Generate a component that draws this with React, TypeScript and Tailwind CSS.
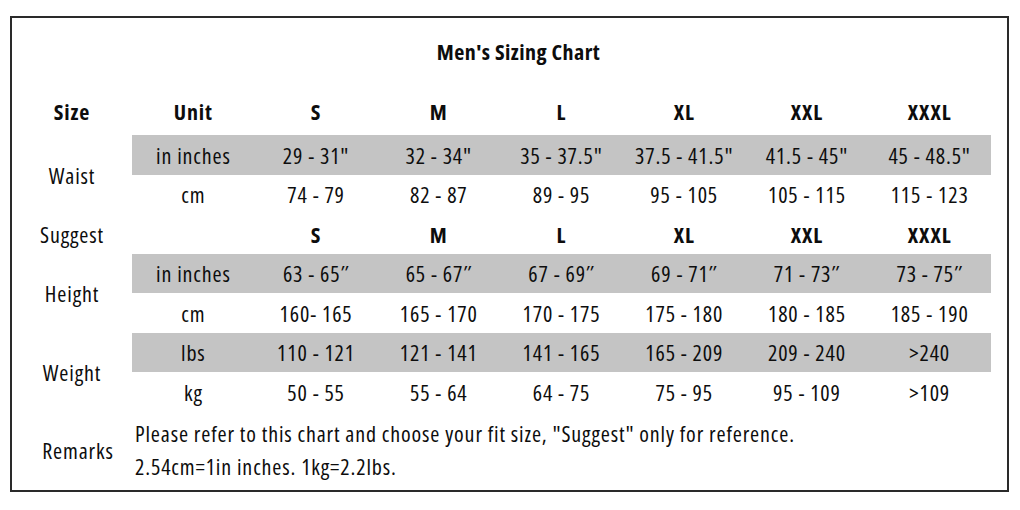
import React from 'react'

// ─── Chart data ────────────────────────────────────────────────────────────────
const SIZES = ['S', 'M', 'L', 'XL', 'XXL', 'XXXL']

interface Row {
  unit: string
  values: string[]
  shaded?: boolean
  bold?: boolean
}

interface Group {
  label: string
  rows: Row[]
}

const GROUPS: Group[] = [
  {
    label: 'Waist',
    rows: [
      { unit: 'in inches', shaded: true, values: ['29 - 31"', '32 - 34"', '35 - 37.5"', '37.5 - 41.5"', '41.5 - 45"', '45 - 48.5"'] },
      { unit: 'cm', values: ['74 - 79', '82 - 87', '89 - 95', '95 - 105', '105 - 115', '115 - 123'] },
    ],
  },
  {
    label: 'Suggest',
    rows: [{ unit: '', bold: true, values: SIZES }],
  },
  {
    label: 'Height',
    rows: [
      { unit: 'in inches', shaded: true, values: ['63 - 65″', '65 - 67″', '67 - 69″', '69 - 71″', '71 - 73″', '73 - 75″'] },
      { unit: 'cm', values: ['160- 165', '165 - 170', '170 - 175', '175 - 180', '180 - 185', '185 - 190'] },
    ],
  },
  {
    label: 'Weight',
    rows: [
      { unit: 'lbs', shaded: true, values: ['110 - 121', '121 - 141', '141 - 165', '165 - 209', '209 - 240', '>240'] },
      { unit: 'kg', values: ['50 - 55', '55 - 64', '64 - 75', '75 - 95', '95 - 109', '>109'] },
    ],
  },
]

// Tall, narrow letters like the chart: condensed Open Sans, opened up a touch
const FONT = "font-['Open_Sans','Carlito',sans-serif] [font-stretch:75%] tracking-[0.85px]"

// ─── One line of the table (unit + six sizes) ─────────────────────────────────
function DataRow({ row }: { row: Row }) {
  return (
    <div
      className={`grid h-[39.5px] grid-cols-7 items-center text-center ${row.shaded ? 'bg-[#c4c4c4]' : ''} ${row.bold ? 'font-bold' : ''}`}
    >
      <span className="whitespace-nowrap">{row.unit}</span>
      {row.values.map((v, i) => (
        <span key={i} className="whitespace-nowrap">{v}</span>
      ))}
    </div>
  )
}

export default function App() {
  return (
    <div className={`min-h-[510px] w-[1020px] bg-white pl-[10px] pt-[16px] text-[22px] leading-[30px] text-[#0d0d0d] ${FONT}`}>
      <div className="h-[476px] w-[999px] border-2 border-[#2a2a2a] pr-[16px]">
        {/* Title */}
        <div className="h-[74px] pl-[34px] pt-[18px] text-center font-bold tracking-[0.45px]">
          Men's Sizing Chart
        </div>

        {/* Header row */}
        <div className="flex h-[43px] items-center pb-[5px] font-bold">
          <div className="w-[120px] text-center">Size</div>
          <div className="grid w-[859px] grid-cols-7 text-center">
            <span>Unit</span>
            {SIZES.map(s => (
              <span key={s}>{s}</span>
            ))}
          </div>
        </div>

        {/* Body groups */}
        {GROUPS.map(group => (
          <div key={group.label} className="flex">
            <div className="flex w-[120px] items-center justify-center">{group.label}</div>
            <div className="w-[859px]">
              {group.rows.map((row, i) => (
                <DataRow key={i} row={row} />
              ))}
            </div>
          </div>
        ))}

        {/* Remarks */}
        <div className="flex pt-[5px]">
          <div className="flex w-[120px] items-center justify-center pl-[12px]">Remarks</div>
          <div className="pl-[3px] leading-[33px]">
            <p>Please refer to this chart and choose your fit size, "Suggest" only for reference.</p>
            <p>2.54cm=1in inches. 1kg=2.2lbs.</p>
          </div>
        </div>
      </div>
    </div>
  )
}
